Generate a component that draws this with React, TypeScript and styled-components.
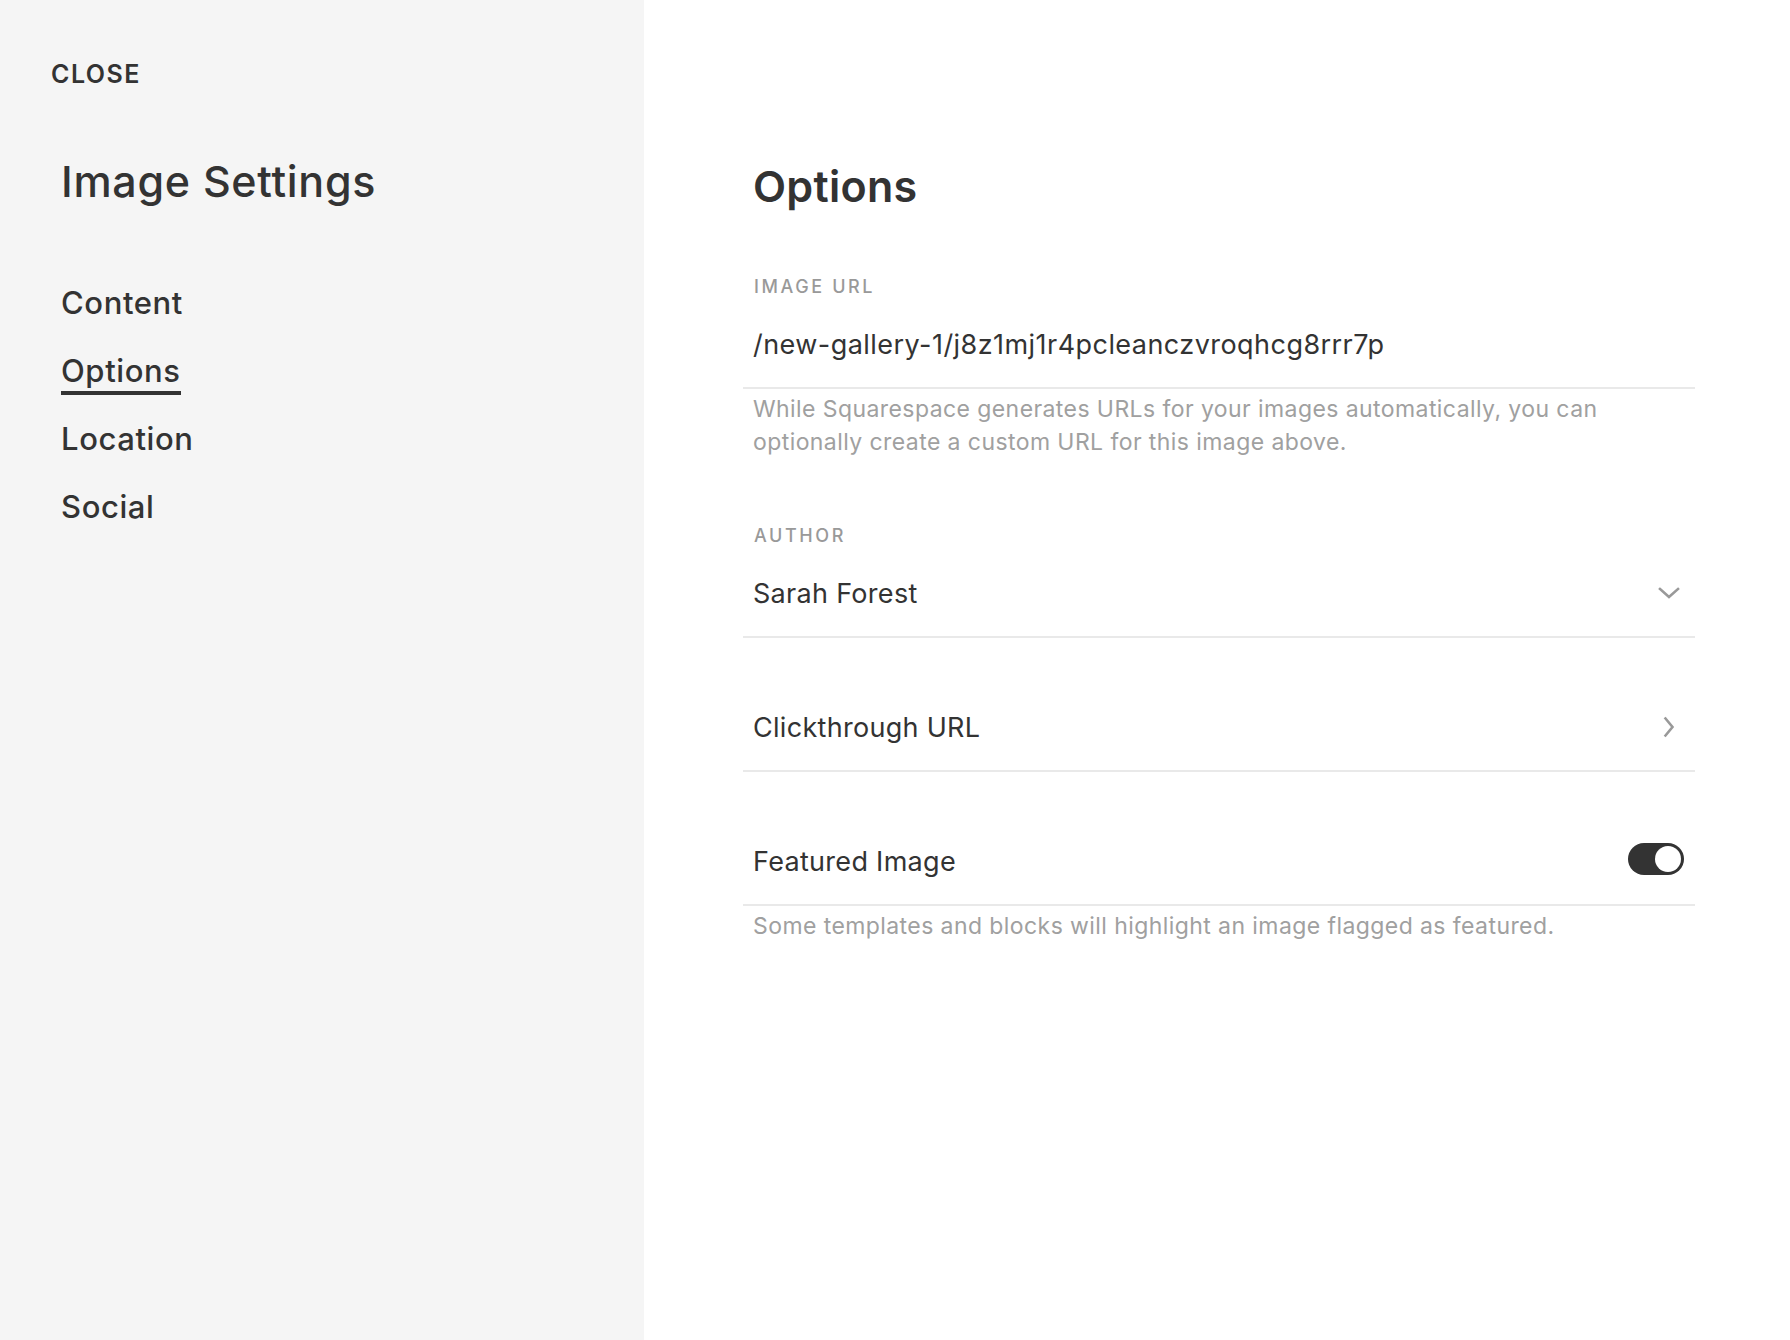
import styled, { createGlobalStyle } from 'styled-components';
import { FC } from 'react';

const GlobalStyle = createGlobalStyle`
  html, body {
    margin: 0;
    padding: 0;
    background: #ffffff;
  }
  body {
    font-family: Inter, "Noto Sans", "Liberation Sans", sans-serif;
    color: #333333;
    -webkit-font-smoothing: antialiased;
  }
  * {
    box-sizing: border-box;
  }
`;

const Layout = styled.div`
  display: flex;
  width: 100%;
  height: 100vh;
  min-height: 1340px;
`;

const Sidebar = styled.aside`
  width: 644px;
  flex-shrink: 0;
  background-color: #f5f5f5;
  padding: 59px 0 0 51px;
  display: flex;
  flex-direction: column;
`;

const CloseButton = styled.button`
  align-self: flex-start;
  border: 0;
  background: none;
  padding: 0;
  font-family: inherit;
  font-size: 25px;
  line-height: 30px;
  font-weight: 600;
  letter-spacing: 1.5px;
  color: #333;
  cursor: pointer;
`;

const SidebarTitle = styled.h1`
  margin: 67px 0 0 10px;
  font-size: 43px;
  line-height: 50px;
  font-weight: 500;
  letter-spacing: 0.7px;
  color: #333;
`;

const Nav = styled.nav`
  margin: 77px 0 0 10px;
  display: flex;
  flex-direction: column;
  align-items: flex-start;
  gap: 24px;
`;

const NavItem = styled.a<{ $active?: boolean }>`
  font-size: 31px;
  line-height: 40px;
  font-weight: 500;
  letter-spacing: 0.6px;
  color: #333;
  text-decoration: none;
  border-bottom: 4px solid ${({ $active }) => ($active ? '#333' : 'transparent')};
  cursor: pointer;
`;

const Main = styled.main`
  flex: 1;
  padding: 161px 95px 0 99px;
`;

const PageTitle = styled.h2`
  margin: 0 0 66px 10px;
  font-size: 43px;
  line-height: 50px;
  font-weight: 600;
  letter-spacing: 0.3px;
  color: #333;
`;

const Field = styled.section<{ $gap?: number }>`
  margin-top: ${({ $gap }) => $gap ?? 0}px;
`;

const Label = styled.div`
  padding-left: 11px;
  margin-bottom: 4px;
  font-size: 18px;
  line-height: 20px;
  font-weight: 500;
  letter-spacing: 2.6px;
  text-transform: uppercase;
  color: #999;
`;

const Row = styled.div`
  height: 88px;
  display: flex;
  align-items: center;
  justify-content: space-between;
  padding: 0 11px 0 10px;
  border-bottom: 2px solid #e9e9e9;
  cursor: pointer;
`;

const Value = styled.span<{ $spacing?: number }>`
  font-size: 27px;
  line-height: 34px;
  padding-top: 2px;
  letter-spacing: ${({ $spacing }) => $spacing ?? 0.3}px;
  color: #333;
`;

const Help = styled.p`
  margin: 4px 0 0;
  padding-left: 10px;
  max-width: 900px;
  font-size: 23px;
  line-height: 33px;
  letter-spacing: 0.42px;
  color: #a0a0a0;
`;

const IconSlot = styled.span`
  display: flex;
  width: 32px;
  justify-content: center;
  margin-right: -1px;
`;

const Toggle = styled.span<{ $on: boolean }>`
  position: relative;
  width: 56px;
  height: 32px;
  border-radius: 16px;
  background-color: ${({ $on }) => ($on ? '#333' : '#ccc')};
  margin-top: -5px;

  &::after {
    content: '';
    position: absolute;
    top: 3px;
    left: ${({ $on }) => ($on ? '27px' : '3px')};
    width: 26px;
    height: 26px;
    border-radius: 50%;
    background: #fff;
  }
`;

const ChevronDown: FC = () => (
  <svg width="22" height="14" viewBox="0 0 22 14" fill="none">
    <path d="M2 3 L11 11 L20 3" stroke="#999" strokeWidth="2.6" strokeLinecap="square" />
  </svg>
);

const ChevronRight: FC = () => (
  <svg width="12" height="22" viewBox="0 0 12 22" fill="none">
    <path d="M2.5 2.5 L9.5 11 L2.5 19.5" stroke="#999" strokeWidth="2.6" strokeLinecap="square" />
  </svg>
);

const navItems = ['Content', 'Options', 'Location', 'Social'];

export function App() {
  return (
    <>
      <GlobalStyle />
      <Layout>
        <Sidebar>
          <CloseButton>CLOSE</CloseButton>
          <SidebarTitle>Image Settings</SidebarTitle>
          <Nav>
            {navItems.map((item) => (
              <NavItem key={item} $active={item === 'Options'}>
                {item}
              </NavItem>
            ))}
          </Nav>
        </Sidebar>
        <Main>
          <PageTitle>Options</PageTitle>

          <Field>
            <Label>Image URL</Label>
            <Row>
              <Value $spacing={0.45}>/new-gallery-1/j8z1mj1r4pcleanczvroqhcg8rrr7p</Value>
            </Row>
            <Help>
              While Squarespace generates URLs for your images automatically, you can
              optionally create a custom URL for this image above.
            </Help>
          </Field>

          <Field $gap={67}>
            <Label>Author</Label>
            <Row>
              <Value>Sarah Forest</Value>
              <IconSlot>
                <ChevronDown />
              </IconSlot>
            </Row>
          </Field>

          <Field $gap={46}>
            <Row>
              <Value>Clickthrough URL</Value>
              <IconSlot>
                <ChevronRight />
              </IconSlot>
            </Row>
          </Field>

          <Field $gap={46}>
            <Row>
              <Value>Featured Image</Value>
              <Toggle $on />
            </Row>
            <Help>Some templates and blocks will highlight an image flagged as featured.</Help>
          </Field>
        </Main>
      </Layout>
    </>
  );
}

export default App;
